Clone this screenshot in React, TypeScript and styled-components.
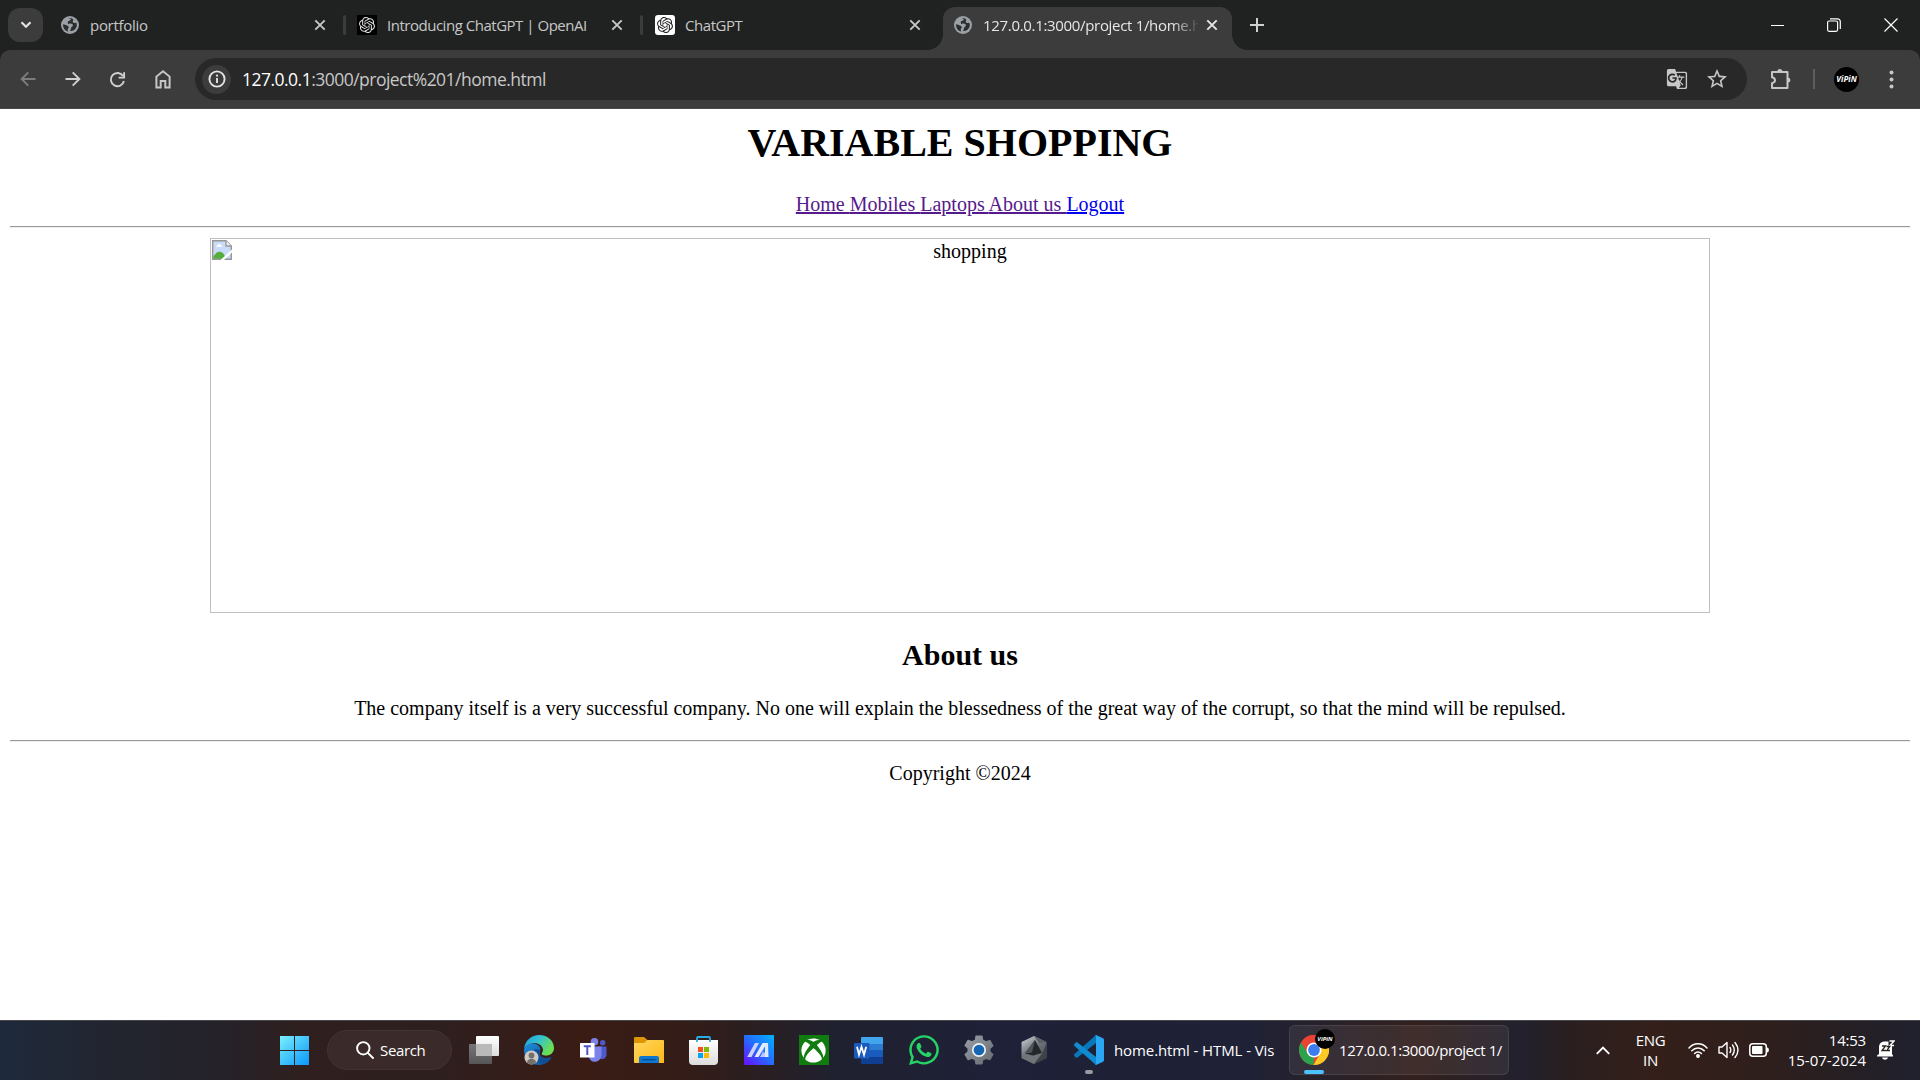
import React from 'react';
import styled, { createGlobalStyle } from 'styled-components';
import { SiOpenai } from 'react-icons/si';
import { FaXbox, FaWhatsapp } from 'react-icons/fa';
import { MdGTranslate, MdStarBorder } from 'react-icons/md';

const GlobalStyle = createGlobalStyle`
  * { box-sizing: border-box; }
  html, body { margin: 0; padding: 0; }
  body { overflow: hidden; background: #fff; }
  svg { display: block; flex: none; }
`;

const Screen = styled.div`
  width: 1920px;
  height: 1080px;
  display: flex;
  flex-direction: column;
  font-family: "Open Sans", "Noto Sans", sans-serif;
  overflow: hidden;
`;

/* ---------- tab strip ---------- */
const TabStrip = styled.div`
  height: 50px;
  flex: none;
  display: flex;
  background: #202221;
  color: #c7c7c7;
`;
const TabSearch = styled.button`
  width: 35px;
  height: 34px;
  margin: 8px 3px 0 8px;
  padding: 0;
  border: 0;
  border-radius: 12px;
  background: #3c3c3c;
  display: flex;
  align-items: center;
  justify-content: center;
`;
const Tab = styled.div<{ $w: number; $pad?: number; $active?: boolean }>`
  width: ${p => p.$w}px;
  height: 43px;
  margin-top: 7px;
  margin-left: ${p => (p.$active ? 6 : 0)}px;
  padding: 0 ${p => (p.$active ? 10 : 12)}px 7px ${p => p.$pad ?? 12}px;
  display: flex;
  align-items: center;
  position: relative;
  border-radius: 12px 12px 0 0;
  background: ${p => (p.$active ? '#3c3c3c' : 'transparent')};
  color: ${p => (p.$active ? '#e6e6e6' : '#c7c7c7')};
  &::before, &::after {
    content: ${p => (p.$active ? '""' : 'none')};
    position: absolute;
    bottom: 0;
    width: 15px;
    height: 15px;
  }
  &::before { left: -15px; background: radial-gradient(circle at 0 0, transparent 14.5px, #3c3c3c 15px); }
  &::after { right: -15px; background: radial-gradient(circle at 100% 0, transparent 14.5px, #3c3c3c 15px); }
`;
const Favicon = styled.span<{ $bg?: string; $r?: number }>`
  width: 20px;
  height: 20px;
  flex: none;
  display: flex;
  align-items: center;
  justify-content: center;
  margin-right: 10px;
  border-radius: ${p => p.$r ?? 0}px;
  background: ${p => p.$bg ?? 'transparent'};
`;
const TabTitle = styled.span<{ $ls: number; $fade?: boolean }>`
  flex: 1;
  min-width: 0;
  overflow: hidden;
  white-space: nowrap;
  font-size: 15px;
  line-height: 20px;
  padding-bottom: 1px;
  letter-spacing: ${p => p.$ls}px;
  ${p => p.$fade && 'mask-image: linear-gradient(90deg, #000 88%, transparent 101%);'}
`;
const TabClose = styled.span`
  width: 20px;
  margin-left: 4px;
  display: flex;
  justify-content: center;
`;
const TabDivider = styled.i`
  width: 3px;
  height: 20px;
  border-radius: 2px;
  margin: 15px 0 0 1px;
  background: #3c3c3c;
`;
const NewTab = styled.div`
  display: flex;
  align-items: center;
  height: 50px;
  padding-left: 18px;
  flex: 1;
`;
const WindowButtons = styled.div`
  display: flex;
  height: 50px;
  padding-right: 1px;
`;
const WindowButton = styled.div<{ $shift?: number }>`
  width: 57px;
  display: flex;
  align-items: center;
  justify-content: center;
  padding-left: ${p => p.$shift ?? 0}px;
`;

/* ---------- toolbar ---------- */
const ToolbarShell = styled.div`
  background: #202221;
  flex: none;
`;
const Toolbar = styled.div`
  height: 59px;
  background: #3c3c3c;
  border-radius: 10px 10px 0 0;
  border-bottom: 1px solid #4a4848;
  display: flex;
  align-items: center;
  padding-left: 6px;
`;
const ToolButton = styled.span<{ $w: number }>`
  width: ${p => p.$w}px;
  flex: none;
  display: flex;
  justify-content: center;
  align-items: center;
`;
const Omnibox = styled.div`
  width: 1552px;
  height: 42px;
  flex: none;
  margin: 0 9px 0 10px;
  border-radius: 21px;
  background: #282828;
  display: flex;
  align-items: center;
  padding: 0 10px 0 7px;
`;
const SiteInfo = styled.span`
  width: 29px;
  height: 29px;
  border-radius: 50%;
  background: #3c3c3c;
  display: flex;
  align-items: center;
  justify-content: center;
`;
const Url = styled.span`
  flex: 1;
  margin-left: 11px;
  font-size: 17.5px;
  line-height: 24px;
  letter-spacing: -0.52px;
  color: #c7c7c7;
  b { font-weight: 400; color: #fff; }
`;
const OmniIcon = styled.span`
  width: 40px;
  display: flex;
  justify-content: center;
  color: #c7c7c7;
`;
const ToolDivider = styled.i`
  width: 2px;
  height: 20px;
  flex: none;
  background: #5e5e5e;
  margin: 0 19px 0 7px;
`;
const MenuButton = styled.span`
  padding-left: 30px;
  flex: none;
`;
const Avatar = styled.span<{ $size: number; $font: number }>`
  width: ${p => p.$size}px;
  height: ${p => p.$size}px;
  flex: none;
  border-radius: 50%;
  background: #000;
  color: #fff;
  font: italic 700 ${p => p.$font}px/1 "Open Sans", sans-serif;
  display: flex;
  align-items: center;
  justify-content: center;
`;

/* ---------- web page ---------- */
const Page = styled.main`
  flex: 1;
  background: #fff;
  color: #000;
  padding: 11px 10px 0;
  text-align: center;
  font-family: "Liberation Serif", "Times New Roman", serif;
  font-size: 20px;
  line-height: 23px;
`;
const Title = styled.h1`
  margin: 0 0 27px;
  font-size: 40px;
  line-height: 46px;
`;
const Nav = styled.nav`
  height: 23px;
`;
const Link = styled.a<{ $fresh?: boolean }>`
  color: ${p => (p.$fresh ? '#0000ee' : '#551a8b')};
  text-decoration: underline;
  text-decoration-thickness: 2px;
`;
const Rule = styled.hr`
  height: 2px;
  margin: 10px 0;
  border: 0;
  border-top: 1px solid #9a9a9a;
  border-bottom: 1px solid #eeeeee;
`;
const BrokenImage = styled.div`
  width: 1500px;
  height: 375px;
  margin: 0 auto;
  border: 1px solid #c0c0c0;
  padding: 1px;
  display: flex;
`;
const AltText = styled.span`
  flex: 1;
`;
const Heading = styled.h2`
  margin: 25px 0;
  font-size: 30px;
  line-height: 34px;
`;
const Paragraph = styled.p`
  margin: 20px 0;
`;

/* ---------- taskbar ---------- */
const Taskbar = styled.footer`
  height: 60px;
  flex: none;
  border-top: 1px solid #47474b;
  padding-bottom: 1px;
  display: flex;
  align-items: center;
  color: #fff;
  background: linear-gradient(90deg, #1e293c 0, #22252f 110px, #25222a 220px, #2f201f 300px, #2e1f1f 440px, #3b1c15 580px, #331d18 690px, #2a1f22 760px, #20212f 830px, #1e2137 980px, #1f2236 1250px, #2a2128 1340px, #33201d 1420px, #22212d 1520px, #2a1f20 1570px, #341f1a 1650px, #2f1f1c 1760px, #251f24 1850px, #20212e 1920px);
`;
const StartButton = styled.div`
  margin: 0 18px 0 280px;
  padding-top: 1px;
`;
const SearchPill = styled.div`
  width: 125px;
  height: 40px;
  border-radius: 20px;
  border: 1px solid #413331;
  background: #3a2b2a;
  display: flex;
  align-items: center;
  padding-left: 28px;
  gap: 6px;
  margin-right: 4px;
  font-size: 15px;
  letter-spacing: -0.35px;
`;
const AppSlot = styled.div`
  width: 55px;
  height: 58px;
  display: flex;
  align-items: center;
  justify-content: center;
`;
const Tile = styled.span`
  width: 30px;
  height: 30px;
  background: #107c10;
  display: flex;
  align-items: center;
  justify-content: center;
`;
const RunningApp = styled.div<{ $active?: boolean }>`
  width: 220px;
  height: 50px;
  position: relative;
  display: flex;
  align-items: center;
  padding: 0 9px;
  border-radius: 6px;
  border: 1px solid ${p => (p.$active ? 'rgba(255,255,255,.09)' : 'transparent')};
  background: ${p => (p.$active ? 'rgba(255,255,255,.065)' : 'transparent')};
  margin-left: ${p => (p.$active ? 5 : 3)}px;
`;
const AppTitle = styled.span<{ $ls: number }>`
  margin-left: 10px;
  white-space: nowrap;
  font-size: 15px;
  line-height: 22px;
  padding-bottom: 1px;
  letter-spacing: ${p => p.$ls}px;
`;
const Indicator = styled.i<{ $x: number; $w: number; $c: string }>`
  position: absolute;
  left: ${p => p.$x}px;
  bottom: 0;
  width: ${p => p.$w}px;
  height: 4px;
  border-radius: 2px;
  background: ${p => p.$c};
`;
const ProfileBadge = styled.span`
  position: absolute;
  left: 25px;
  top: 3px;
`;
const Tray = styled.div`
  margin-left: auto;
  height: 58px;
  display: flex;
  align-items: center;
  padding-right: 25px;
`;
const Language = styled.div`
  width: 75px;
  margin-left: 3px;
  padding-bottom: 1px;
  text-align: center;
  font-size: 15px;
  line-height: 20px;
  letter-spacing: -0.3px;
`;
const TrayIcons = styled.div`
  display: flex;
  gap: 10px;
  align-items: center;
`;
const Clock = styled.div`
  width: 96px;
  margin-right: 11px;
  padding-bottom: 1px;
  display: flex;
  flex-direction: column;
  align-items: flex-end;
  font-size: 15px;
  line-height: 20px;
`;
const ClockLine = styled.span<{ $ls: number }>`
  letter-spacing: ${p => p.$ls}px;
`;

const Globe = () => (
  <svg width="18" height="18" viewBox="0 0 18 18">
    <circle cx="9" cy="9" r="9" fill="#9aa0a6" />
    <path d="M8 2.2c2 0 2.3 1.3 1.3 2.1-1 .8-2.6.6-2.6 2 0 1.300 1 1.100 2.500 1.100 1.800 0 2.900.9 2.700 2.200-.2 1.200-1.600 1.300-1.900 2.500-.2 1-.2 2.600-1.200 2.900 4 .4 7-2.600 7-6 0-1-.2-1.700-.6-2.500-1 .8-2.200.8-3-.1-.8-.9-.5-1.700.3-2.600C11 2.400 9.500 1.700 8 2.200ZM2.100 8.200c1.500.3 3.800.8 4.900 1.800 1 .9.900 1.800.1 2.400-.7.500-.3 1.800.2 3.100C4.200 15 1.800 12 2.100 8.200Z" fill="#2c2e2e" />
  </svg>
);
const Cross = () => (
  <svg width="12" height="12" viewBox="0 0 12 12" stroke="currentColor" strokeWidth="1.9">
    <path d="M1.300 1.300l9.400 9.400M10.700 1.300L1.300 10.700" />
  </svg>
);
const Arrow = ({ left }: { left?: boolean }) => (
  <svg width="16" height="16" viewBox="0 0 16 16" fill="none" stroke={left ? '#7d7d7d' : '#d0d0d0'} strokeWidth="1.900">
    <path d={left ? 'M15.500 8H2M8.300 1.300L1.600 8l6.700 6.700' : 'M.5 8H14M7.700 1.300L14.400 8l-6.700 6.700'} />
  </svg>
);
const Reload = () => (
  <svg width="17" height="17" viewBox="0 0 18 18" fill="none" stroke="#d0d0d0" strokeWidth="2">
    <path d="M14.800 5.200A7 7 0 1 0 15.800 10.600M16 1.300V7h-5.800" />
  </svg>
);
const Home = () => (
  <svg width="18" height="20" viewBox="0 0 18 20" fill="none" stroke="#c7c7c7" strokeWidth="2">
    <path d="M2.400 18.500V7.600L9 2.200l6.600 5.400v10.900h-4.300v-6.600H6.700v6.600Z" />
  </svg>
);
const Info = () => (
  <svg width="18" height="18" viewBox="0 0 18 18">
    <circle cx="9" cy="9" r="7.600" fill="none" stroke="#e3e3e3" strokeWidth="1.900" />
    <path d="M9 8v5" stroke="#e3e3e3" strokeWidth="1.900" />
    <circle cx="9" cy="5.700" r="1.100" fill="#e3e3e3" />
  </svg>
);
const Puzzle = () => (
  <svg width="24" height="24" viewBox="0 0 24 24">
    <path d="M3 5h15.500v16H3v-4.800c4-1 4-5 0-6Z" fill="none" stroke="#c7c7c7" strokeWidth="2" strokeLinejoin="round" />
    <path d="M8.300 4.500a2.500 2.500 0 0 1 5 0ZM19 10.800a2.400 2.400 0 0 1 0 4.800Z" fill="#c7c7c7" />
  </svg>
);
const BrokenIcon = () => (
  <svg width="20" height="20" viewBox="0 0 20 20">
    <path d="M.7.7H14L19.300 6v13.300H.7Z" fill="#c9dbf8" stroke="#969696" strokeWidth="1.400" />
    <path d="M4 6.800c0-1.600 1.800-1.400 2-2.300.6-1.300 2.500-.8 2.500.6 1.300 0 1.500.9 1.500 1.700Z" fill="#fff" />
    <path d="M1.400 17c2.500-5.500 6.500-7 10-3.400l3 5.100h-13Z" fill="#55ad3b" />
    <path d="M14 .7V6h5.300" fill="#f4f4f4" stroke="#969696" strokeWidth="1.300" />
    <path d="M20 9.500v3L12 20H8.500Z" fill="#fff" />
  </svg>
);

const StartIcon = () => (
  <svg width="29" height="29" viewBox="0 0 29 29">
    <defs><linearGradient id="win" gradientUnits="userSpaceOnUse" x1="0" y1="0" x2="29" y2="29"><stop stopColor="#7af1ff" /><stop offset="1" stopColor="#0a96f8" /></linearGradient></defs>
    <path d="M0 0h14v14H0ZM15 0h14v14H15ZM0 15h14v14H0ZM15 15h14v14H15Z" fill="url(#win)" />
  </svg>
);
const SearchIcon = () => (
  <svg width="18" height="18" viewBox="0 0 18 18" fill="none" stroke="#fff" strokeWidth="1.900">
    <circle cx="7.300" cy="7.300" r="6.200" /><path d="M11.800 11.800L17 17" strokeLinecap="round" />
  </svg>
);
const TaskViewIcon = () => (
  <svg width="30" height="28" viewBox="0 0 30 28">
    <defs>
      <linearGradient id="tv" x2="0" y2="1"><stop stopColor="#fff" /><stop offset="1" stopColor="#dcdcdc" /></linearGradient>
      <linearGradient id="tv2" x2="0" y2="1"><stop stopColor="#767676" /><stop offset="1" stopColor="#565656" /></linearGradient>
    </defs>
    <rect y="8" width="23" height="20" rx="1" fill="url(#tv2)" />
    <rect x="7" width="23" height="20" rx="1" fill="url(#tv)" />
    <path d="M7 8h16v12H8a1 1 0 0 1-1-1Z" fill="#b9b9b9" />
  </svg>
);
const EdgeIcon = () => (
  <svg width="30" height="30" viewBox="0 0 30 30">
    <defs>
      <linearGradient id="e1" x2="1" y2=".5"><stop stopColor="#1d9de2" /><stop offset=".5" stopColor="#35c1d0" /><stop offset="1" stopColor="#6be04f" /></linearGradient>
      <linearGradient id="e2" x2="1" y2="1"><stop stopColor="#1b8fdd" /><stop offset="1" stopColor="#114a8b" /></linearGradient>
    </defs>
    <path d="M0 15C1 9 7 7 12 9c4 1.500 5 5 4 7-2 4 2 9 11 6.500C24 28 19 30 15 30 6 30 0 23 0 15Z" fill="url(#e2)" />
    <path d="M11 14c-3 6 1 14 9 15 3-1 6-3.500 7.500-7C19 25 13 21 16 15Z" fill="#0e4f98" />
    <path d="M0 14C1 5 8 0 15 0c9 0 15 6 15 13 0 5-4 7.500-8 7.500-3.500 0-5-1-4-2.500 3-4-1-10-8-10C5 8 1 11 0 14Z" fill="url(#e1)" />
    <circle cx="7.500" cy="22.500" r="7" fill="#cfcac5" />
    <circle cx="7.500" cy="20.500" r="2.900" fill="#74706c" /><path d="M3 27.500c0-5 9-5 9 0-2 2.500-7 2.500-9 0Z" fill="#74706c" />
  </svg>
);
const TeamsIcon = () => (
  <svg width="27" height="24" viewBox="0 0 27 24">
    <circle cx="22.700" cy="4.800" r="2.700" fill="#5059c9" /><circle cx="14.500" cy="3.800" r="3.800" fill="#7b83eb" />
    <path d="M18 8.500h8.500v8c0 5-6 6-8.500 3Z" fill="#5059c9" />
    <path d="M9 8.500h12.500V16c0 10-12.500 10-12.500 2Z" fill="#7b83eb" />
    <rect y="5" width="14.500" height="14.500" rx=".6" fill="#fff" />
    <path d="M3.700 8.200h7.200M7.300 8.200v8.800" stroke="#5158c5" strokeWidth="2" />
  </svg>
);
const FolderIcon = () => (
  <svg width="30" height="26" viewBox="0 0 30 26">
    <defs><linearGradient id="fo" x2="1" y2="1"><stop stopColor="#ffd75e" /><stop offset="1" stopColor="#ffb715" /></linearGradient></defs>
    <path d="M0 1a1 1 0 0 1 1-1h9l4 3.500h15a1 1 0 0 1 1 1V12H0Z" fill="#dc9505" />
    <path d="M0 6h10l3.500-3H29a1 1 0 0 1 1 1v22H1a1 1 0 0 1-1-1Z" fill="url(#fo)" />
    <path d="M5 26v-5a2 2 0 0 1 2-2h16a2 2 0 0 1 2 2v5Z" fill="#0e78d0" />
    <path d="M8.500 22.700h13" stroke="#0a4a87" strokeWidth="1.300" />
  </svg>
);
const StoreIcon = () => (
  <svg width="29" height="29" viewBox="0 0 29 29">
    <defs><linearGradient id="st" x2="0" y2="1"><stop stopColor="#fff" /><stop offset="1" stopColor="#dcdcdc" /></linearGradient></defs>
    <path d="M0 4h29v21a4 4 0 0 1-4 4H4a4 4 0 0 1-4-4Z" fill="url(#st)" />
    <path d="M8 6V2a1 1 0 0 1 1-1h11a1 1 0 0 1 1 1v4" fill="none" stroke="#27aee6" strokeWidth="1.800" />
    <path d="M9 11h5v5H9Z" fill="#f25022" /><path d="M15 11h5v5h-5Z" fill="#7fba00" /><path d="M9 17h5v5H9Z" fill="#00a4ef" /><path d="M15 17h5v5h-5Z" fill="#ffb900" />
  </svg>
);
const AsusIcon = () => (
  <svg width="30" height="30" viewBox="0 0 30 30">
    <defs><linearGradient id="as" y1="1" x2="1" y2="0"><stop stopColor="#6b0cff" /><stop offset=".5" stopColor="#256bff" /><stop offset="1" stopColor="#00b4ff" /></linearGradient></defs>
    <path d="M0 0h30v30H0Z" fill="url(#as)" />
    <path d="M11 8h4L7.500 22H3.200Z" fill="#c9d3ff" /><path d="M18.500 8H23l-8.500 14H10.500Z" fill="#e6ebff" />
    <path d="M20.500 12.500L18 17.500h3.500V22H16l2-3.500Z" fill="#b9c9fb" /><path d="M21 8h3l.5 14H21Z" fill="#dfe8ff" />
  </svg>
);
const WordIcon = () => (
  <svg width="29" height="27" viewBox="0 0 29 27">
    <path d="M7 1a1 1 0 0 1 1-1h20a1 1 0 0 1 1 1v6H7Z" fill="#41a5ee" /><path d="M7 7h22v6.700H7Z" fill="#2b7cd3" />
    <path d="M7 13.500h22v6.700H7Z" fill="#185abd" /><path d="M7 20h22v6a1 1 0 0 1-1 1H8a1 1 0 0 1-1-1Z" fill="#103f91" />
    <rect y="6" width="15.500" height="15.500" rx="1" fill="#185abd" />
    <path d="M3 9.700l2 8 2.500-8 2.500 8 2.200-8" fill="none" stroke="#fff" strokeWidth="1.800" />
  </svg>
);
const GearIcon = () => (
  <svg width="30" height="30" viewBox="0 0 30 30">
    <defs><linearGradient id="ge" x2="1" y2="1"><stop stopColor="#98a0a8" /><stop offset="1" stopColor="#65696e" /></linearGradient></defs>
    <path d="M11.500 5L12 1h6l.7 4 3.200 1.800 4-1.300 3 5.200-3 2.800v3.300l3 2.700-3 5.300-4-1.400L18.700 25l-.7 4h-6l-.7-4-3.200-1.700-4 1.400-3-5.300 3-2.700v-3.400l-3-2.700 3-5.200 4 1.300Z" fill="url(#ge)" stroke="url(#ge)" strokeWidth="1.200" strokeLinejoin="round" />
    <circle cx="15" cy="15" r="6.200" fill="#1266b3" stroke="#f1f1f1" strokeWidth="1.700" />
  </svg>
);
const HexIcon = () => (
  <svg width="26" height="28" viewBox="0 0 26 28">
    <defs><linearGradient id="he" x1=".2" x2=".8" y2="1"><stop stopColor="#c4c9ce" /><stop offset=".5" stopColor="#666c72" /><stop offset="1" stopColor="#55585c" /></linearGradient></defs>
    <path d="M13 0l12.500 6v16L13 28 .5 22V6Z" fill="url(#he)" />
    <path d="M13 0l12.500 6-7 1.500Z" fill="#596068" /><path d="M14 4l7 13-9 2.500-8-2Z" fill="#25282b" />
    <path d="M4 17.500L14 4l-3 12.500Z" fill="#4e5459" /><path d="M4 18l8 2 9.500-3L13 28 .5 22Z" fill="#70757a" />
    <path d="M25.500 7v15L13 28l8.500-11Z" fill="#3f4347" />
  </svg>
);
const CodeIcon = () => (
  <svg width="30" height="30" viewBox="0 0 30 30">
    <path d="M22 0v8L3.500 22.500c-.6.400-1.300.3-1.700-.1L.4 21c-.5-.6-.5-1.400.1-1.900Z" fill="#0877b9" />
    <path d="M22 30v-8L3.500 7.500c-.6-.4-1.300-.3-1.700.1L.4 9c-.5.600-.5 1.400.1 1.900Z" fill="#108bd0" />
    <path d="M22 0l7 3.200c.6.300 1 1 1 1.700v20.200c0 .7-.4 1.400-1 1.700L22 30c-.6.200-1.200 0-1.700-.5 .8.700 1.700.2 1.700-.8V1.300c0-1-1-1.500-1.700-.8C20.800 0 21.400-.2 22 0Z" fill="#29a7f2" />
  </svg>
);
const ChromeIcon = () => (
  <svg width="30" height="30" viewBox="0 0 30 30">
    <circle cx="15" cy="15" r="15" fill="#ea4335" />
    <path d="M2 7.500L9 18.800 15 22l-.3 8A15 15 0 0 1 2 7.500Z" fill="#2ba24c" />
    <path d="M28 7.500A15 15 0 0 1 14.500 30L21.200 18.300 20 8Z" fill="#fdc925" />
    <path d="M2 7.500A15 15 0 0 1 28 7.500H15Z" fill="#ea4335" />
    <circle cx="15" cy="15" r="7.500" fill="#fff" /><circle cx="15" cy="15" r="5.900" fill="#3c7ded" />
  </svg>
);

const Wifi = () => (
  <svg width="20" height="16" viewBox="0 0 20 16" fill="none" stroke="#fff" strokeWidth="1.500" strokeLinecap="round">
    <path d="M1 6c5-5.600 13-5.600 18 0M3.800 8.800c3.400-3.800 9-3.800 12.400 0M6.600 11.500c2-2.100 4.800-2.100 6.800 0" /><circle cx="10" cy="14" r="1.200" fill="#fff" />
  </svg>
);
const Volume = () => (
  <svg width="21" height="18" viewBox="0 0 21 18" fill="none" stroke="#fff" strokeWidth="1.400" strokeLinecap="round" strokeLinejoin="round">
    <path d="M1 6h3l5-4.500v15L4 12H1ZM12 6.500q1.600 2.500 0 5M14.500 4q3.600 5 0 10M17 1.500q6 7.500 0 15" />
  </svg>
);
const Battery = () => (
  <svg width="21" height="14" viewBox="0 0 21 14">
    <rect x=".8" y=".8" width="16.500" height="12.400" rx="3" fill="none" stroke="#fff" strokeWidth="1.500" />
    <rect x="3" y="3" width="10.500" height="8" rx="1" fill="#fff" /><path d="M18 4.500c2.500 0 2.500 5 0 5Z" fill="#fff" />
  </svg>
);
const Bell = () => (
  <svg width="18" height="20" viewBox="0 0 18 20">
    <path d="M2 14V7.500C2 3 5 1.500 8 1.500h3.500V6H15v8l1 1.500v1H0v-1ZM5 17.500h6c-1 3-5 3-6 0Z" fill="#fff" />
    <path d="M12.500 1H17l-4 4.500h4" fill="none" stroke="#fff" strokeWidth="1.400" /><path d="M5 6h3.500L5 10.500h4M9.500 6.500h3.300l-3 4H13" fill="none" stroke="#2b1f1e" strokeWidth="1.300" />
  </svg>
);

export default function App() {
  return (
    <Screen>
      <GlobalStyle />
      <TabStrip>
        <TabSearch><svg width="12" height="8" viewBox="0 0 12 8" fill="none" stroke="#e3e3e3" strokeWidth="2.200"><path d="M1.500 1.300L6 5.800l4.500-4.500" /></svg></TabSearch>
        <Tab $w={296} $pad={14}><Favicon><Globe /></Favicon><TabTitle $ls={-0.3}>portfolio</TabTitle><TabClose><Cross /></TabClose></Tab>
        <TabDivider />
        <Tab $w={293} $pad={11}><Favicon $bg="#000"><SiOpenai size={16} color="#ddd" /></Favicon><TabTitle $ls={-0.48}>Introducing ChatGPT | OpenAI</TabTitle><TabClose><Cross /></TabClose></Tab>
        <TabDivider />
        <Tab $w={294}><Favicon $bg="#fff" $r={3}><SiOpenai size={16} color="#222" /></Favicon><TabTitle $ls={-0.45}>ChatGPT</TabTitle><TabClose><Cross /></TabClose></Tab>
        <Tab $w={289} $pad={10} $active><Favicon><Globe /></Favicon><TabTitle $ls={-0.32} $fade>127.0.0.1:3000/project 1/home.h</TabTitle><TabClose><Cross /></TabClose></Tab>
        <NewTab><svg width="14" height="14" viewBox="0 0 14 14" stroke="#d0d0d0" strokeWidth="2"><path d="M7 0v14M0 7h14" /></svg></NewTab>
        <WindowButtons>
          <WindowButton $shift={2}><svg width="13" height="13" viewBox="0 0 13 13"><path d="M0 6h13v1H0Z" fill="#fff" /></svg></WindowButton>
          <WindowButton><svg width="14" height="14" viewBox="0 0 14 14" fill="none" stroke="#fff" strokeWidth="1.200"><rect x=".6" y="3" width="10" height="10.300" rx="1.500" /><path d="M3 .8h7.500a2.800 2.800 0 0 1 2.800 2.800V11" /></svg></WindowButton>
          <WindowButton><svg width="14" height="14" viewBox="0 0 14 14" stroke="#fff" strokeWidth="1.200"><path d="M.5.5l13 13M13.500.5L.5 13.500" /></svg></WindowButton>
        </WindowButtons>
      </TabStrip>
      <ToolbarShell>
        <Toolbar>
          <ToolButton $w={44}><Arrow left /></ToolButton>
          <ToolButton $w={45}><Arrow /></ToolButton>
          <ToolButton $w={45}><Reload /></ToolButton>
          <ToolButton $w={45}><Home /></ToolButton>
          <Omnibox>
            <SiteInfo><Info /></SiteInfo>
            <Url><b>127.0.0.1</b>:3000/project%201/home.html</Url>
            <OmniIcon><MdGTranslate size={22} /></OmniIcon>
            <OmniIcon><MdStarBorder size={24} /></OmniIcon>
          </Omnibox>
          <ToolButton $w={50}><Puzzle /></ToolButton>
          <ToolDivider />
          <Avatar $size={25} $font={8}>ViPiN</Avatar>
          <MenuButton><svg width="5" height="19" viewBox="0 0 5 19" fill="#c7c7c7"><circle cx="2.500" cy="2.500" r="2" /><circle cx="2.500" cy="9.500" r="2" /><circle cx="2.500" cy="16.500" r="2" /></svg></MenuButton>
        </Toolbar>
      </ToolbarShell>
      <Page>
        <Title>VARIABLE SHOPPING</Title>
        <Nav>
          <Link>Home </Link><Link>Mobiles </Link><Link>Laptops </Link><Link>About us </Link><Link $fresh>Logout</Link>
        </Nav>
        <Rule />
        <BrokenImage><BrokenIcon /><AltText>shopping</AltText></BrokenImage>
        <Heading>About us</Heading>
        <Paragraph>The company itself is a very successful company. No one will explain the blessedness of the great way of the corrupt, so that the mind will be repulsed.</Paragraph>
        <Rule />
        <Paragraph>Copyright ©2024</Paragraph>
      </Page>
      <Taskbar>
        <StartButton><StartIcon /></StartButton>
        <SearchPill><SearchIcon />Search</SearchPill>
        <AppSlot><TaskViewIcon /></AppSlot>
        <AppSlot><EdgeIcon /></AppSlot>
        <AppSlot><TeamsIcon /></AppSlot>
        <AppSlot><FolderIcon /></AppSlot>
        <AppSlot><StoreIcon /></AppSlot>
        <AppSlot><AsusIcon /></AppSlot>
        <AppSlot><Tile><FaXbox size={25} color="#fff" /></Tile></AppSlot>
        <AppSlot><WordIcon /></AppSlot>
        <AppSlot><FaWhatsapp size={34} color="#25d366" /></AppSlot>
        <AppSlot><GearIcon /></AppSlot>
        <AppSlot><HexIcon /></AppSlot>
        <RunningApp><CodeIcon /><AppTitle $ls={-0.1}>home.html - HTML - Vis</AppTitle><Indicator $x={20} $w={8} $c="#9c97a3" /></RunningApp>
        <RunningApp $active><ChromeIcon /><ProfileBadge><Avatar $size={20} $font={6}>ViPiN</Avatar></ProfileBadge><AppTitle $ls={-0.45}>127.0.0.1:3000/project 1/</AppTitle><Indicator $x={14} $w={20} $c="#4cc2ff" /></RunningApp>
        <Tray>
          <svg width="14" height="9" viewBox="0 0 14 9" fill="none" stroke="#fff" strokeWidth="1.900"><path d="M.8 7.800L7 1.600l6.200 6.200" /></svg>
          <Language>ENG<br />IN</Language>
          <TrayIcons><Wifi /><Volume /><Battery /></TrayIcons>
          <Clock><ClockLine $ls={-0.2}>14:53</ClockLine><ClockLine $ls={0}>15-07-2024</ClockLine></Clock>
          <Bell />
        </Tray>
      </Taskbar>
    </Screen>
  );
}
